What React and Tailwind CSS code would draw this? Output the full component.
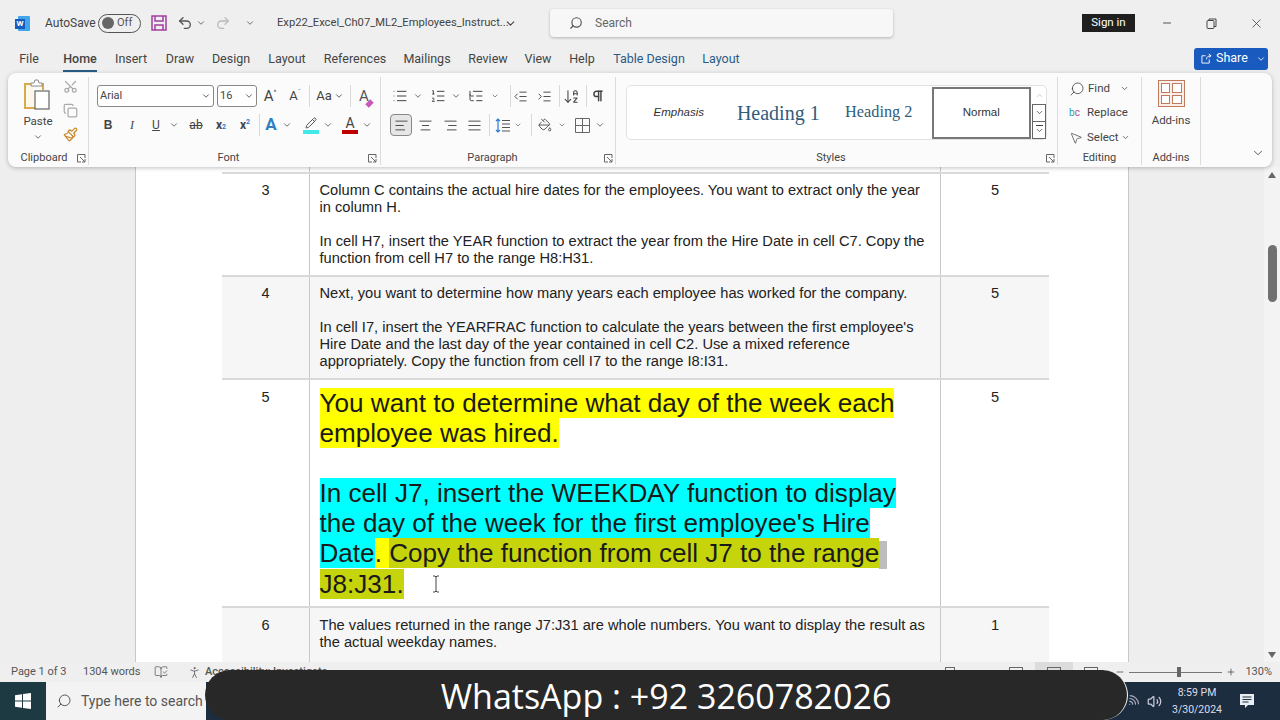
import React from "react";
import {
  AlignCenter,
  AlignJustify,
  AlignLeft,
  AlignRight,
  ArrowDownAZ,
  BookOpenCheck,
  ChevronDown,
  ChevronUp,
  Copy,
  IndentDecrease,
  IndentIncrease,
  List,
  ListOrdered,
  ListTree,
  Minus,
  MousePointer2,
  PaintBucket,
  Paintbrush,
  Pencil,
  PersonStanding,
  Pilcrow,
  Plus,
  Redo2,
  Scissors,
  Search,
  Undo2,
  Volume2,
  Wifi,
  X,
} from "lucide-react";

const tabs = [
  ["File", "w-[42px]"],
  ["Home", "w-[60px]"],
  ["Insert", "w-[42px]"],
  ["Draw", "w-[56px]"],
  ["Design", "w-[46px]"],
  ["Layout", "w-[66px]"],
  ["References", "w-[70px]"],
  ["Mailings", "w-[74px]"],
  ["Review", "w-[48px]"],
  ["View", "w-[52px]"],
  ["Help", "w-[36px]"],
  ["Table Design", "w-[98px] text-[#2b5b84]"],
  ["Layout", "w-[46px] text-[#2b5b84]"],
];

const Chev = ({ className = "w-[10px]" }) => (
  <div className={`flex justify-center items-center shrink-0 ${className}`}>
    <ChevronDown size={10} strokeWidth={2} className="text-[#555]" />
  </div>
);

const Btn = ({ className = "", children }) => (
  <div className={`flex justify-center items-center shrink-0 h-[22px] ${className}`}>
    {children}
  </div>
);

const Sep = ({ className = "" }) => (
  <div className={`w-px h-[22px] bg-[#d8d8d8] shrink-0 ${className}`}></div>
);

const Launcher = () => (
  <svg width="9" height="9" viewBox="0 0 9 9" fill="none" stroke="#666" strokeWidth="1">
    <path d="M8 4V.5H.5V8H4M3 3l5 5M8 5v3H5" />
  </svg>
);

const Group = ({ label, className = "", labelClass = "", launcher, children }) => (
  <div className={`flex flex-col h-[88px] shrink-0 border-r border-[#dcdcdc] ${className}`}>
    <div className="flex-1 min-h-0">{children}</div>
    <div className={`flex items-center h-[14px] text-[11px] text-[#444] ${labelClass}`}>
      <span className="flex-1 text-center">{label}</span>
      {launcher && <Launcher />}
    </div>
  </div>
);

const WordIcon = () => (
  <div className="relative w-[15px] h-[15px] mr-[15px] ml-[15px]">
    <div className="absolute left-[3px] top-0 w-[12px] h-[15px] bg-[#41a5ee] rounded-[1px]"></div>
    <div className="absolute left-0 top-[3px] w-[10px] h-[10px] bg-[#185abd] text-white text-[8px] leading-[10px] text-center font-bold">
      W
    </div>
  </div>
);

const Row = ({ num, score, className = "", pad = "pt-[8px]", numPad = "pt-[8px]", children }) => (
  <div className={`flex border-b-2 border-[#d9d9d9] shrink-0 text-[14.67px] leading-[17px] text-[#222] ${className}`}>
    <div className={`w-[87px] text-center text-[14.5px] ${numPad}`}>{num}</div>
    <div className={`w-[632px] pl-[9.5px] border-x border-[#c9c9c9] whitespace-nowrap ${pad}`}>{children}</div>
    <div className={`w-[108px] text-center ${numPad}`}>{score}</div>
  </div>
);

export default function App() {
  return (
    <div className="relative flex flex-col w-[1280px] h-[720px] overflow-hidden bg-[#efefef] font-['Roboto','Liberation_Sans',sans-serif] text-[#444]">
      {/* title bar */}
      <div className="flex items-center h-[46px] shrink-0 text-[12px]">
        <WordIcon />
        <span className="w-[53px]">AutoSave</span>
        <div className="flex items-center w-[43px] h-[19px] rounded-full border border-[#555] pl-[3px] gap-[3px]">
          <div className="w-[12px] h-[12px] rounded-full bg-[#666]"></div>
          <span className="text-[11px] text-[#555]">Off</span>
        </div>
        <svg width="16" height="16" viewBox="0 0 16 16" fill="none" stroke="#a43ea0" strokeWidth="1.5" className="ml-[10px]">
          <path d="M1 1h14v14H1zM4 1v5h8V1M4 15v-5h8v5" />
        </svg>
        <Undo2 size={16} className="ml-[10px] text-[#555]" />
        <Chev className="w-[12px] ml-[2px]" />
        <Redo2 size={16} className="ml-[8px] text-[#bbb]" />
        <Chev className="w-[10px] ml-[14px]" />
        <span className="ml-[22px] w-[226px] whitespace-nowrap text-[11.2px] text-[#444]">Exp22_Excel_Ch07_ML2_Employees_Instruct...</span>
        <ChevronDown size={13} className="ml-[1px] text-[#444]" />
        <div className="flex items-center ml-[33px] w-[343px] h-[28px] bg-[#f7f7f7] rounded-[4px] shadow-[0_1px_3px_rgba(0,0,0,0.25)] pl-[19px] gap-[12px]">
          <Search size={14} className="-scale-x-100 text-[#555]" />
          <span className="text-[#666]">Search</span>
        </div>
        <div className="flex justify-center items-center ml-[189px] w-[53px] h-[18px] bg-[#1f1f1f] text-white text-[11.5px]">Sign in</div>
        <Minus size={12} className="ml-[26px] text-[#555]" />
        <svg width="11" height="11" viewBox="0 0 11 11" fill="none" stroke="#444" strokeWidth="1" className="ml-[33px]">
          <rect x="1" y="2.5" width="7" height="8" rx="1" />
          <path d="M3 2.500V1h7v7.500H8" />
        </svg>
        <X size={15} strokeWidth={1.25} className="ml-[32px] text-[#444]" />
      </div>

      {/* tabs */}
      <div className="flex items-center h-[27px] pl-[8px] shrink-0 text-[12.5px]">
        {tabs.map(([name, w], i) => (
          <div key={i} className={`relative flex justify-center items-center h-full shrink-0 ${w}`}>
            <span className={name === "Home" ? "border-b-2 border-[#2b5b84] font-medium pb-[1px] mt-[3px]" : ""}>{name}</span>
          </div>
        ))}
        <div className="flex items-center ml-auto mr-[12px] mb-[2px] w-[74px] h-[22px] rounded-[3px] bg-[#185abd] text-white pl-[7px] gap-[4px]">
          <svg width="11" height="11" viewBox="0 0 12 12" fill="none" stroke="white" strokeWidth="1">
            <path d="M5 3H1v8h8V7M6 7c0-3 2-4 5-4M8.500 1 11 3 8.500 5" />
          </svg>
          <span>Share</span>
          <ChevronDown size={10} className="ml-[4px]" />
        </div>
      </div>

      {/* ribbon */}
      <div className="relative z-10 flex ml-[8px] w-[1264px] h-[94px] pt-[4px] shrink-0 rounded-[8px] bg-[#fbfbfb] shadow-[0_1px_4px_rgba(0,0,0,0.25)]">
        <Group label="Clipboard" launcher className="w-[81px]" labelClass="pl-[3px] pr-[2px]">
          <div className="flex pt-[2px]">
            <div className="flex flex-col items-center w-[50px] pl-[10px] shrink-0">
              <svg width="30" height="32" viewBox="0 0 30 32" fill="none">
                <path d="M10 5H2v24h10" stroke="#d9a94e" strokeWidth="2" fill="#fdf8ea" />
                <path d="M18 5h2v6" stroke="#d9a94e" strokeWidth="2" />
                <path d="M8 7V4h3l1-3h3l1 3h3v3z" stroke="#8a8a8a" fill="white" />
                <rect x="12" y="12" width="14" height="18" stroke="#666" strokeWidth="1.2" fill="white" />
              </svg>
              <span className="text-[11.5px] mt-[2px]">Paste</span>
              <ChevronDown size={10} className="mt-[2px] text-[#555]" />
            </div>
            <div className="flex flex-col items-center gap-[9px] pl-[5px]">
              <Scissors size={15} className="-rotate-90 text-[#aaa]" />
              <Copy size={15} className="text-[#aaa]" />
              <Paintbrush size={15} className="text-[#c98a2e]" />
            </div>
          </div>
        </Group>

        <Group label="Font" launcher className="w-[292px]" labelClass="pr-[3px]">
          <div className="flex flex-col pl-[8px] pt-[8px] gap-[7px]">
            <div className="flex items-center">
              <div className="flex items-center justify-between w-[117px] h-[22px] px-[2px] border border-[#888] rounded-[3px] bg-white text-[11px]">
                <span>Arial</span>
                <ChevronDown size={10} />
              </div>
              <div className="flex items-center justify-between w-[40px] h-[22px] ml-[3px] px-[2px] border border-[#888] rounded-[3px] bg-white text-[11px]">
                <span>16</span>
                <ChevronDown size={10} />
              </div>
              <Btn className="w-[26px] text-[15px]">A<sup className="text-[7px]">^</sup></Btn>
              <Btn className="w-[24px] text-[13px]">A<sup className="text-[7px] text-[#2b7cd3]">ˇ</sup></Btn>
              <Sep className="ml-[2px]" />
              <Btn className="w-[40px] text-[13px]">Aa<ChevronDown size={10} className="ml-[2px]" /></Btn>
              <Sep />
              <Btn className="w-[26px] text-[15px] text-[#555]">
                <span className="relative">A<span className="absolute -right-[4px] bottom-[1px] w-[7px] h-[5px] bg-[#c75ab4] -rotate-45"></span></span>
              </Btn>
            </div>
            <div className="flex items-center">
              <Btn className="w-[22px] font-bold text-[12px] font-['Liberation_Sans']">B</Btn>
              <Btn className="w-[26px] italic text-[12px] font-['Liberation_Serif']">I</Btn>
              <Btn className="w-[22px] underline text-[12px]">U</Btn>
              <Chev className="w-[14px]" />
              <Btn className="w-[30px] line-through text-[12px]">ab</Btn>
              <Btn className="w-[20px] font-bold text-[12px]">x<sub className="text-[7px] text-[#2b7cd3]">2</sub></Btn>
              <Btn className="w-[28px] font-bold text-[12px]">x<sup className="text-[7px] text-[#2b7cd3]">2</sup></Btn>
              <Sep />
              <Btn className="w-[22px] text-[#2f7fc1] font-bold text-[17px]">A</Btn>
              <Chev />
              <Btn className="flex-col w-[24px] ml-[7px]">
                <Pencil size={12} className="text-[#555]" />
                <div className="w-[16px] h-[4px] mt-[1px] bg-[#43e8e8]"></div>
              </Btn>
              <Chev />
              <Btn className="flex-col w-[24px] ml-[5px] text-[14px] leading-[14px]">
                <span>A</span>
                <div className="w-[16px] h-[4px] bg-[#c00000]"></div>
              </Btn>
              <Chev />
            </div>
          </div>
        </Group>

        <Group label="Paragraph" launcher className="w-[235px]" labelClass="pr-[2px]">
          <div className="flex flex-col pl-[8px] pt-[8px] gap-[7px]">
            <div className="flex items-center">
              <Btn className="w-[22px]"><List size={16} strokeWidth={1.5} /></Btn>
              <Chev className="w-[14px]" />
              <Btn className="w-[26px]"><ListOrdered size={16} strokeWidth={1.5} /></Btn>
              <Chev />
              <Btn className="w-[30px]"><ListTree size={16} strokeWidth={1.5} /></Btn>
              <Chev className="w-[8px]" />
              <Sep className="ml-[11px]" />
              <Btn className="w-[18px]"><IndentDecrease size={15} strokeWidth={1.5} /></Btn>
              <Btn className="w-[30px]"><IndentIncrease size={15} strokeWidth={1.5} /></Btn>
              <Sep />
              <Btn className="w-[22px]"><ArrowDownAZ size={17} strokeWidth={1.5} /></Btn>
              <Sep className="ml-[4px]" />
              <Btn className="w-[22px]"><Pilcrow size={14} strokeWidth={2.5} /></Btn>
            </div>
            <div className="flex items-center">
              <Btn className="w-[22px] ml-px rounded-[4px] border border-[#888] bg-[#e6e6e6]"><AlignLeft size={15} strokeWidth={1.5} /></Btn>
              <Btn className="w-[26px]"><AlignCenter size={15} strokeWidth={1.5} /></Btn>
              <Btn className="w-[24px]"><AlignRight size={15} strokeWidth={1.5} /></Btn>
              <Btn className="w-[24px]"><AlignJustify size={15} strokeWidth={1.5} /></Btn>
              <Sep className="ml-[3px]" />
              <Btn className="w-[24px]">
                <svg width="15" height="15" viewBox="0 0 15 15" fill="none" strokeWidth="1.2">
                  <path d="M3 1v13M1 3l2-2 2 2M1 12l2 2 2-2" stroke="#2b7cd3" />
                  <path d="M7 2.500h8M7 6h8M7 9.500h8M7 13h8" stroke="#555" />
                </svg>
              </Btn>
              <Chev className="w-[8px]" />
              <Sep className="ml-[9px]" />
              <Btn className="w-[26px]"><PaintBucket size={14} strokeWidth={1.5} /></Btn>
              <Chev className="w-[8px]" />
              <Btn className="w-[24px] ml-[4px]">
                <svg width="15" height="15" viewBox="0 0 15 15" fill="none" stroke="#666">
                  <path d="M.5.500h14v14H.500zM7.500 1v13M1 7.500h13" />
                </svg>
              </Btn>
              <Chev className="w-[12px]" />
            </div>
          </div>
        </Group>

        <Group label="Styles" launcher className="w-[442px]" labelClass="pr-[2px]">
          <div className="pl-[10px] pt-[8px]">
            <div className="flex items-center w-[421px] h-[55px] rounded-[5px] border border-[#e2e2e2] bg-white">
              <div className="w-[104px] text-center italic text-[11.500px] font-['Liberation_Sans'] text-[#333]">Emphasis</div>
              <div className="w-[96px] text-center text-[20px] font-['Liberation_Serif'] text-[#2f5c7a]">Heading 1</div>
              <div className="w-[106px] text-center text-[16.3px] font-['Liberation_Serif'] text-[#2f5c7a]">Heading 2</div>
              <div className="flex justify-center items-center w-[100px] h-[52px] border-2 border-[#777] text-[11.500px] text-[#333] font-['Liberation_Sans']">Normal</div>
              <div className="flex flex-col w-[14px] h-[52px] ml-px">
                <div className="flex flex-1 justify-center items-center"><ChevronUp size={9} className="text-[#bbb]" /></div>
                <div className="flex justify-center items-center h-[18px] border border-[#666]"><ChevronDown size={9} /></div>
                <div className="flex flex-col justify-center items-center h-[17px] border border-t-0 border-[#666]">
                  <div className="w-[7px] h-px bg-[#444]"></div>
                  <ChevronDown size={9} />
                </div>
              </div>
            </div>
          </div>
        </Group>

        <Group label="Editing" className="w-[84px]">
          <div className="flex flex-col pt-[2px] pl-[11px] gap-[5.5px] text-[11.500px]">
            <div className="flex items-center h-[19px] gap-[2px]">
              <Search size={16} strokeWidth={1.25} className="-scale-x-100" />
              <span className="ml-[1px]">Find</span>
              <ChevronDown size={9} className="ml-[8px]" />
            </div>
            <div className="flex items-center h-[19px] gap-[4px]">
              <span className="flex items-end w-[14px] text-[10px] leading-[12px]">
                <span className="text-[#2aa5a5]">b</span>
                <span className="text-[#b04a9e]">c</span>
              </span>
              <span>Replace</span>
            </div>
            <div className="flex items-center h-[19px] gap-[4px]">
              <MousePointer2 size={14} strokeWidth={1.25} />
              <span>Select</span>
              <ChevronDown size={9} className="-ml-[2px]" />
            </div>
          </div>
        </Group>

        <Group label="Add-ins" className="w-[59px]">
          <div className="flex flex-col items-center pt-[3px]">
            <div className="grid grid-cols-2 gap-[2px] w-[27px] h-[27px] p-[2px] border border-[#c07a5e] bg-[#fbeee8]">
              <div className="border border-[#c07a5e] bg-white"></div>
              <div className="border border-[#c07a5e] bg-white"></div>
              <div className="border border-[#c07a5e] bg-white"></div>
              <div className="border border-[#c07a5e] bg-white"></div>
            </div>
            <span className="mt-[5px] text-[11.500px]">Add-ins</span>
          </div>
        </Group>

        <div className="flex flex-1 justify-end items-end pr-[7px] pb-[7px]">
          <ChevronDown size={14} strokeWidth={1.5} />
        </div>
      </div>

      {/* document */}
      <div className="flex flex-1 min-h-0 overflow-hidden bg-[#eeeeee]">
        <div className="w-[135px] shrink-0"></div>
        <div className="w-[994px] shrink-0 bg-white border-x border-[#c8c8c8] pl-[86px] font-['Liberation_Sans']">
          <div className="flex flex-col w-[827px]">
            <Row className="h-[7px]" pad="" numPad=""></Row>
            <Row num="3" score="5" className="h-[103px]">
              <p>Column C contains the actual hire dates for the employees. You want to extract only the year</p>
              <p>in column H.</p>
              <p className="mt-[17px]">In cell H7, insert the YEAR function to extract the year from the Hire Date in cell C7. Copy the</p>
              <p>function from cell H7 to the range H8:H31.</p>
            </Row>
            <Row num="4" score="5" className="h-[103px] bg-[#f6f6f6]">
              <p>Next, you want to determine how many years each employee has worked for the company.</p>
              <p className="mt-[17px]">In cell I7, insert the YEARFRAC function to calculate the years between the first employee's</p>
              <p>Hire Date and the last day of the year contained in cell C2. Use a mixed reference</p>
              <p>appropriately. Copy the function from cell I7 to the range I8:I31.</p>
            </Row>
            <Row num="5" score="5" numPad="pt-[9px]" className="h-[228px]">
              <div className="text-[26.1px] leading-[30px] text-[#1a1a1a]">
                <p><span className="bg-[#ffff00]">You want to determine what day of the week each</span></p>
                <p><span className="bg-[#ffff00]">employee was hired.</span></p>
                <p className="mt-[30px]"><span className="bg-[#00ffff]">In cell J7, insert the WEEKDAY function to display</span></p>
                <p><span className="bg-[#00ffff]">the day of the week for the first employee's Hire</span></p>
                <p>
                  <span className="bg-[#00ffff]">Date</span>
                  <span className="bg-[#ffff00]">.</span>
                  <span className="bg-[#ffff00]"> </span>
                  <span className="bg-[#c6d40c]">Copy the function from cell J7 to the range</span>
                  <span className="inline-block w-[8px] h-[28px] align-middle bg-[#bdbdbd]"></span>
                </p>
                <p className="flex items-center">
                  <span className="bg-[#c6d40c]">J8:J31.</span>
                  <svg width="8" height="18" viewBox="0 0 8 18" fill="none" stroke="#444" strokeWidth="1" className="ml-[28px]">
                    <path d="M1 1h2l1 1 1-1h2M4 2v14M1 17h2l1-1 1 1h2" />
                  </svg>
                </p>
              </div>
            </Row>
            <Row num="6" score="1" pad="pt-[9px]" numPad="pt-[9px]" className="h-[60px] bg-[#f6f6f6]">
              <p>The values returned in the range J7:J31 are whole numbers. You want to display the result as</p>
              <p>the actual weekday names.</p>
            </Row>
          </div>
        </div>
        <div className="flex-1"></div>
        <div className="flex flex-col items-center w-[16px] shrink-0 bg-[#f3f3f3] pt-[5px] pb-[4px]">
          <div className="w-0 h-0 border-x-[4px] border-x-transparent border-b-[6px] border-b-[#666]"></div>
          <div className="w-[9px] h-[57px] mt-[67px] rounded-full bg-[#707070]"></div>
          <div className="mt-auto w-0 h-0 border-x-[4px] border-x-transparent border-t-[6px] border-t-[#666]"></div>
        </div>
      </div>

      {/* status bar */}
      <div className="flex items-center h-[20px] shrink-0 pl-[11px] text-[11px] text-[#555]">
        <span className="w-[72px]">Page 1 of 3</span>
        <span className="w-[70px]">1304 words</span>
        <BookOpenCheck size={14} strokeWidth={1.25} className="ml-[1px]" />
        <PersonStanding size={15} strokeWidth={1.25} className="ml-[19px]" />
        <span className="ml-[3px] whitespace-nowrap font-medium">Accessibility: Investigate</span>
        <span className="ml-auto w-[10px] h-[10px] mr-[43px] border border-[#666]"></span>
        <div className="flex items-center">
          <div className="w-[37.5px] h-[20px] flex justify-center items-center"><span className="w-[14px] h-[10px] border border-[#666]"></span></div>
          <div className="w-[37.5px] h-[20px] flex justify-center items-center bg-[#dcdcdc]"><span className="w-[14px] h-[10px] border border-[#666]"></span></div>
          <div className="w-[37.5px] h-[20px] flex justify-center items-center"><span className="w-[14px] h-[10px] border border-[#666]"></span></div>
        </div>
        <Minus size={10} className="ml-[5px]" />
        <div className="relative flex items-center w-[93px] h-[12px] ml-[4px]">
          <div className="w-full h-px bg-[#777]"></div>
          <div className="absolute left-[48px] w-[4px] h-[10px] bg-[#666]"></div>
        </div>
        <Plus size={10} className="ml-[4px]" />
        <span className="w-[44px] pr-[8px] text-right">130%</span>
      </div>

      {/* taskbar */}
      <div className="flex items-center h-[38px] shrink-0 bg-[#1b2d3f] text-white">
        <div className="flex justify-center items-center w-[46px] h-full bg-[#1d3a42]">
          <svg width="16" height="16" viewBox="0 0 16 16" fill="white">
            <path d="M0 2.200 7 1.200V7.500H0zM8 1 16 0v7.500H8zM0 8.500h7v6.300L0 13.800zM8 8.500h8V16L8 15z" />
          </svg>
        </div>
        <div className="flex items-center w-[160px] h-full bg-[#f3f3f3] pl-[10px] gap-[9px] text-[#555] text-[14px] whitespace-nowrap overflow-hidden">
          <Search size={16} strokeWidth={1.5} className="-scale-x-100 shrink-0" />
          <span>Type here to search</span>
        </div>
        <div className="flex items-center ml-auto pr-[16px]">
          <Wifi size={14} className="rotate-45 text-[#aab]" />
          <Volume2 size={15} className="ml-[7px] text-[#ccd]" />
          <div className="flex flex-col items-center w-[66px] ml-[2px] text-[10.5px] leading-[17px] text-[#dde]">
            <span>8:59 PM</span>
            <span>3/30/2024</span>
          </div>
          <div className="flex justify-center items-center w-[34px]">
            <svg width="16" height="16" viewBox="0 0 16 16">
              <path d="M1 1h14v11H9l-3 3v-3H1z" fill="#e8eef4" />
              <path d="M3.500 4h9M3.500 6.500h9M3.500 9h6" stroke="#1b2d3f" strokeWidth="1" />
            </svg>
          </div>
        </div>
      </div>

      {/* watermark pill over the taskbar */}
      <div className="absolute z-20 left-[205px] bottom-0 flex justify-center items-center w-[923px] h-[50px] pt-[3px] rounded-[26px] bg-[#282828] border-r border-white text-white text-[34px] font-['Open_Sans']">
        WhatsApp : +92 3260782026
      </div>
    </div>
  );
}
